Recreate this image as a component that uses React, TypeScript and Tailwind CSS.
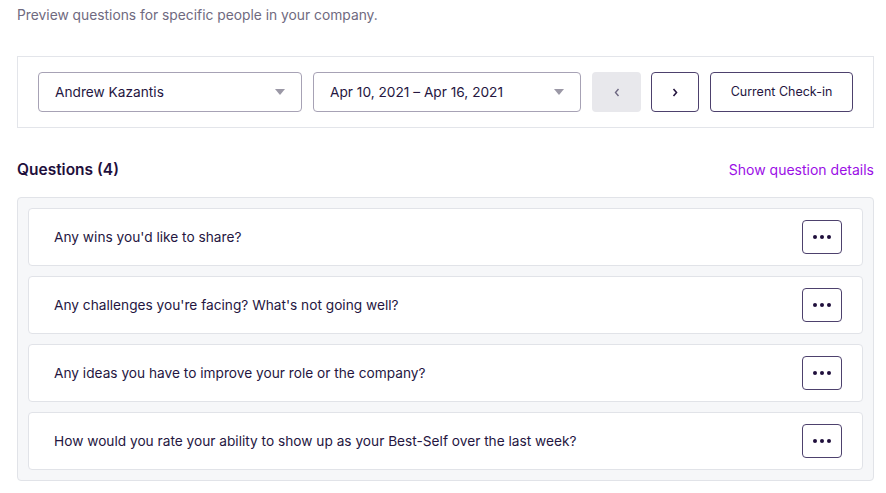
const QUESTIONS = [
  "Any wins you'd like to share?",
  "Any challenges you're facing? What's not going well?",
  'Any ideas you have to improve your role or the company?',
  'How would you rate your ability to show up as your Best-Self over the last week?',
]

function Caret() {
  return (
    <svg width="10" height="6" viewBox="0 0 10 6" className="shrink-0">
      <path d="M0 0h10L5 6z" fill="#9b98a6" />
    </svg>
  )
}

function Select({ value, width }: { value: string; width: string }) {
  return (
    <div
      className={`${width} h-10 flex items-center justify-between pl-4 pr-4 border border-[#a7a2b5] rounded-[4px] bg-white text-[13.7px] text-[#25163f]`}
    >
      <span>{value}</span>
      <Caret />
    </div>
  )
}

export default function App() {
  return (
    <div className="w-[886px] h-[493px] bg-white pl-[17px] pr-[12px] pt-[6px] overflow-hidden" style={{ fontFamily: 'Inter, "Noto Sans", sans-serif' }}>
      <p className="text-[13.8px] text-[#6f6a80] leading-[18px]">
        Preview questions for specific people in your company.
      </p>

      {/* Filters */}
      <div className="mt-[32px] h-[72px] border border-[#e3e5ea] flex items-center pl-[20px]">
        <Select value="Andrew Kazantis" width="w-[264px]" />
        <div className="ml-[11px]">
          <Select value="Apr 10, 2021 – Apr 16, 2021" width="w-[268px]" />
        </div>
        <button className="ml-[11px] w-[49px] h-10 rounded-[4px] bg-[#e8e8ec] flex items-center justify-center text-[#6e6882]">
          <svg width="6" height="9" viewBox="0 0 6 9"><path d="M4.5 1L1.5 4.5l3 3.5" fill="none" stroke="currentColor" strokeWidth="1.4" /></svg>
        </button>
        <button className="ml-[10px] w-[48px] h-10 rounded-[4px] border border-[#4d416d] flex items-center justify-center text-[#25163f]">
          <svg width="6" height="9" viewBox="0 0 6 9"><path d="M1.5 1l3 3.5-3 3.5" fill="none" stroke="currentColor" strokeWidth="1.6" /></svg>
        </button>
        <button className="ml-[11px] w-[143px] h-10 rounded-[4px] border border-[#4d416d] text-[12.5px] text-[#25163f]">
          Current Check-in
        </button>
      </div>

      {/* Questions header */}
      <div className="mt-[30px] flex items-center justify-between">
        <h2 className="text-[15.5px] font-semibold text-[#1f0f3c]">Questions (4)</h2>
        <button className="text-[14px] text-[#9b0ee6]">Show question details</button>
      </div>

      <div className="mt-[16px] bg-[#f6f7f9] border border-[#e1e3e8] rounded-[4px] p-[10px] flex flex-col gap-[10px]">
        {QUESTIONS.map(q => (
          <div
            key={q}
            className="h-[58px] bg-white border border-[#e1e3e8] rounded-[4px] flex items-center justify-between pl-[25px] pr-[20px]"
          >
            <span className="text-[13.7px] text-[#25163f]">{q}</span>
            <button className="w-10 h-[34px] border border-[#4d416d] rounded-[4px] flex items-center justify-center gap-[3px]">
              <span className="w-[4px] h-[4px] rounded-full bg-[#1f0f3c]" />
              <span className="w-[4px] h-[4px] rounded-full bg-[#1f0f3c]" />
              <span className="w-[4px] h-[4px] rounded-full bg-[#1f0f3c]" />
            </button>
          </div>
        ))}
      </div>
    </div>
  )
}
